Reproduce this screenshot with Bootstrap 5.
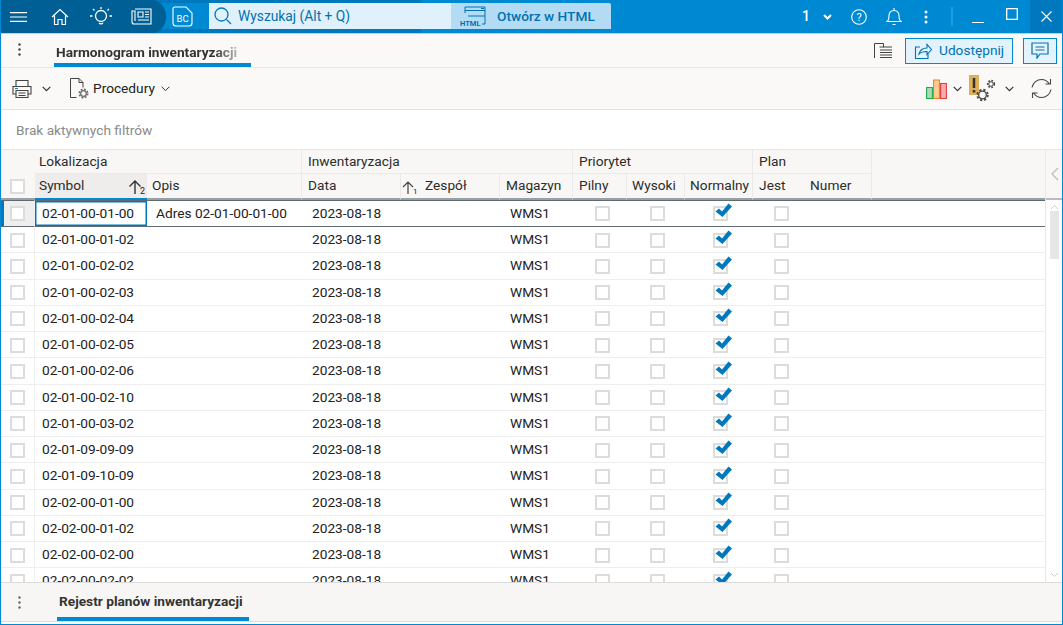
<!DOCTYPE html>
<html lang="pl">
<head>
<meta charset="utf-8">
<title>Harmonogram inwentaryzacji</title>
<link rel="stylesheet" href="https://cdn.jsdelivr.net/npm/bootstrap@5.3.0/dist/css/bootstrap.min.css">
<style>
html,body{height:100%;overflow:hidden}
body{font-family:Roboto,"Liberation Sans",sans-serif;font-size:13.7px;color:#222;background:#fff}
.win{height:625px;border:1px solid #0089d3;border-top:0;display:flex;flex-direction:column;overflow:hidden}
.tbar{height:34px;flex:none;background:linear-gradient(#0078bd 0 3px,transparent 3px 29px,#0078bd 29px) 0 0/420px 100% no-repeat,#0089d3;border-bottom:1px solid #a9d6f0;color:#fff;display:flex;align-items:center}
.tleft{width:166px;height:33px;background:#005f94;border-radius:0 14px 14px 0/0 50% 50% 0;display:flex;align-items:center;flex:none;padding-left:9px;margin-left:-1px}
.tbar svg{display:block}
.bcico{margin-left:6px}
.sbox{width:242px;height:26px;margin-left:16px;margin-top:-1px;background:#e0f1fb;color:#0072b0;font-size:13.8px;display:flex;align-items:center;padding-left:5px;gap:6px}
.htmlbtn{width:160px;height:26px;margin-top:-1px;background:#b3dcf4;border-radius:0 2px 0 0;color:#0072b0;font-size:13.7px;font-weight:500;display:flex;align-items:center;padding-left:9px;gap:10px}
.tright{margin-left:auto;display:flex;align-items:center;height:33px}
.closebox{width:32px;height:33px;background:#0078bd;display:flex;align-items:center;justify-content:center;margin-left:12px}
.onenum{font-size:14px;font-weight:500;margin-right:9px}
.tabs{height:34px;flex:none;background:#faf9f7;border-bottom:1px solid #e9e8e6;display:flex;align-items:flex-start}
.dots{width:36px;flex:none;display:flex;justify-content:center;padding-top:9px}
.tabitem{font-weight:700;color:#333;height:33px;border-bottom:4px solid #0089d3;padding:11px 0 0 2px;line-height:15px;width:197px;margin-left:17px}
.tabitem span{display:block;width:184px;white-space:nowrap;overflow:hidden;-webkit-mask-image:linear-gradient(90deg,#000 86%,rgba(0,0,0,.25))}
.sharebtn{height:26px;background:#e3f2fb;border:1px solid #0089d3;border-radius:0;color:#0072b0;display:flex;align-items:center;padding:0 0 0 8px;font-size:13.7px;gap:7px}
.tools{height:42px;flex:none;background:#faf9f7;border-bottom:1px solid #e2e2e2;display:flex;align-items:center}
.filt{height:40px;flex:none;background:#fff;color:#8a8a8a;padding:13px 0 0 15px;line-height:15px;border-bottom:1px solid #e6e6e6}
.gridwrap{flex:1;min-height:0;display:flex;overflow:hidden;border-bottom:1px solid #dcdcdc}
.tblbox{width:1044px;flex:none;overflow:hidden}
.sidebar{flex:1;display:flex;flex-direction:column;border-left:1px solid #e8e8e8}
.sidetop{height:50px;background:#f8f7f5;border-bottom:2px solid #bbb;display:flex;align-items:center;justify-content:center;flex:none}
.sidescroll{flex:1;display:flex;flex-direction:column;align-items:center;padding-top:4px}
.thumb{width:9px;height:48px;background:#e6e6e6;margin-top:1px}
.sidescroll svg:last-child{margin-top:auto;margin-bottom:4px}
.gt{width:1044px;table-layout:fixed;border-collapse:separate;border-spacing:0;font-size:13.7px}
.gt th{font-weight:400;background:#f8f7f5;padding:0 0 1px 6px;white-space:nowrap;overflow:hidden;color:#2b2b2b}
.gt thead tr:first-child th{height:24px;border-right:1px solid #eceae8;border-bottom:1px solid #eceae8}
.gt thead tr:nth-child(2) th{height:26px;border-right:1px solid #eceae8;border-bottom:2px solid #9aa1a5;box-sizing:border-box}
.gt th.plain{border-right:0!important;border-bottom-color:#f8f7f5!important}
.gt thead tr:nth-child(2) th.plain{border-bottom-color:#9aa1a5!important}
.gt th.sorted{background:#eeedeb;border-bottom:2px solid #0089d3!important;border-right:0!important}
.gt th.sortic{padding:0;text-align:center}
.gt td{height:26.25px;padding:0;border-bottom:1px solid #eeeeee;white-space:nowrap;line-height:15px;vertical-align:middle}
.gt td.ck0{border-right:1px solid #f0f0f0}
.gt td.tx{padding-left:7px}
.gt td.tx2{padding-left:9px}
.gt td.tx3{padding-left:10px}
.gt td.cc{text-align:center}
.gt td.cs{text-align:center;padding-left:4px}
.gt td.cs2{text-align:center;padding-left:2px}
.gt tr.sel td{border-top:1px solid #5f6b73;border-bottom:1px solid #5f6b73;height:27px}
.gt tr.sel td.ck0{background:#eeeeee;box-shadow:inset 3px 0 0 #0078bd}
.gt tr.sel td.act{box-shadow:inset 0 0 0 1.5px #0078bd}
.box{display:inline-block;width:15px;height:15px;background:#fff;border:2px solid #dcdcdc;vertical-align:middle;position:relative}
.box svg{position:absolute;left:0;top:-5px}
.foot{flex:none;height:38px;background:#f7f6f4;display:flex;align-items:flex-start}
.ftab{margin-left:20px;width:192px;height:38px;border-bottom:4px solid #0089d3;padding:11px 0 0 2px;line-height:15px;font-weight:700;color:#333;white-space:nowrap}
.fend{height:3px;flex:none;background:#fff;border-top:1px solid #dddddd}
</style>
</head>
<body>
<div class="win">
  <div class="tbar">
    <div class="tleft">
      <svg width="19" height="12" viewBox="0 0 20 12" fill="none" stroke="#fff" stroke-width="1.300"><path d="M1 1.500h18M1 6h18M1 10.500h18"/></svg>
      <svg style="margin-left:23px" width="18" height="18" viewBox="0 0 18 18" fill="none" stroke="#fff" stroke-width="1.200"><path d="M1 9 9 1.500 17 9M3.500 7.500V16.500h3.500v-5h4v5h3.500V7.500"/></svg>
      <svg style="margin-left:21px" width="22" height="22" viewBox="0 0 22 22" fill="none" stroke="#fff" stroke-width="1.300"><circle cx="11" cy="10" r="5.500"/><path d="M9 17c1 1.200 3 1.200 4 0M11 1v2M3 3l1.500 1.500M19 3l-1.500 1.500M0 10h2.500M19.500 10H22"/></svg>
      <svg style="margin-left:19px" width="21" height="17" viewBox="0 0 21 17" fill="none" stroke="#fff" stroke-width="1.100"><path d="M4 1h16v15H3c-1.200 0-2-.8-2-2V3h3v10"/><path d="M7 4h5v5H7zM14 4h4M14 6.500h4M14 9h4M7 12h11"/></svg>
    </div>
    <svg class="bcico" width="21" height="21" viewBox="0 0 21 21" fill="none" stroke="#fff" stroke-width="1.100"><path d="M1 3c0-1.200.8-2 2-2h11l6 6v10c0 1.500-1 3-3 3H4c-2 0-3-1.500-3-3z"/><text x="4.500" y="16" fill="#fff" stroke="none" font-family="Roboto,sans-serif" font-size="9.500">BC</text></svg>
    <div class="sbox">
      <svg width="18" height="18" viewBox="0 0 18 18" fill="none" stroke="#0078bd" stroke-width="1.300"><circle cx="7.500" cy="7.500" r="6.500"/><path d="m12.500 12.500 4.500 4.500"/></svg>
      <span>Wyszukaj (Alt + Q)</span>
    </div>
    <div class="htmlbtn">
      <svg width="27" height="22" viewBox="0 0 27 22" fill="none" stroke="#0072b0" stroke-width="1"><path d="M5 8V2h20v17M5 5.500h20M8 11h17M21 3.500h3M25 19h-3"/><text x="0" y="21" fill="#0072b0" stroke="none" font-family="Roboto,sans-serif" font-size="7.500" font-weight="700">HTML</text></svg>
      <span>Otwórz w HTML</span>
    </div>
    <div class="tright">
      <span class="onenum">1</span>
      <svg class="ms-1" width="9" height="6" viewBox="0 0 9 6" fill="none" stroke="#fff" stroke-width="2"><path d="m1 1 3.500 3.500L8 1"/></svg>
      <svg style="margin-left:19px" width="16" height="16" viewBox="0 0 16 16" fill="none" stroke="#fff" stroke-width="1.100"><circle cx="8" cy="8" r="7.300"/><text x="8" y="12" fill="#fff" stroke="none" text-anchor="middle" font-family="Roboto,sans-serif" font-size="11">?</text></svg>
      <svg style="margin-left:19px" width="16" height="19" viewBox="0 0 16 19" fill="none" stroke="#fff" stroke-width="1.100"><path d="M1 14.500c2-1.500 2-3 2-6 0-3 2-5 5-5s5 2 5 5c0 3 0 4.500 2 6zM8 1v2.500M6.500 17.500h3"/></svg>
      <svg style="margin-left:22px" width="4" height="14" viewBox="0 0 4 14" fill="#fff"><circle cx="2" cy="2" r="1.500"/><circle cx="2" cy="7" r="1.500"/><circle cx="2" cy="12" r="1.500"/></svg>
      <svg style="margin-left:23px" width="2" height="19" viewBox="0 0 2 19" fill="#1c9bdf"><path d="M0 0h2v19H0z"/></svg>
      <svg style="margin-left:19px;margin-top:12px" width="12" height="2" viewBox="0 0 12 2" fill="#fff"><path d="M0 0h12v1H0z"/></svg>
      <svg style="margin-left:22px;margin-bottom:6px" width="12" height="12" viewBox="0 0 12 12" fill="none" stroke="#fff" stroke-width="1.300"><path d="M.7.700h10.600v10.600H.7z"/></svg>
      <div class="closebox"><svg width="11" height="11" viewBox="0 0 11 11" fill="none" stroke="#fff" stroke-width="1.100"><path d="m.5.500 10 10M10.500.500l-10 10"/></svg></div>
    </div>
  </div>

  <div class="tabs">
    <div class="dots"><svg width="3" height="13" viewBox="0 0 3 13" fill="#444"><circle cx="1.500" cy="1.500" r="1.200"/><circle cx="1.500" cy="6.500" r="1.200"/><circle cx="1.500" cy="11.500" r="1.200"/></svg></div>
    <div class="tabitem"><span>Harmonogram inwentaryzacji</span></div>
    <div class="ms-auto d-flex align-items-center" style="height:33px">
      <svg width="19" height="17" viewBox="0 0 19 17" fill="none" stroke="#444" stroke-width="1"><path d="M1.500 16V1.500h9v3.500h-4M10 5h9M7 8h12M7 10.500h12M7 13h12M7 15.500h12"/></svg>
      <button type="button" class="btn sharebtn" style="width:108px;margin-left:13px">
        <svg width="18" height="18" viewBox="0 0 18 18" fill="none" stroke="#0072b0" stroke-width="1.100"><path d="M6 5H1.500v11.500H14V12"/><path d="M5 12c1-4 4-6 8-6V2.500l4.500 5-4.500 5V9.500c-3 0-6 .5-8 2.500z"/></svg>
        <span>Udostępnij</span>
      </button>
      <button type="button" class="btn sharebtn justify-content-center" style="width:34px;margin-left:10px;margin-right:5px;padding:0">
        <svg width="18" height="17" viewBox="0 0 18 17" fill="none" stroke="#0072b0" stroke-width="1.200"><path d="M1 1h16v11H9l-3 4v-4H1z"/><path d="M4.500 5h9M4.500 8h9"/></svg>
      </button>
    </div>
  </div>

  <div class="tools">
    <svg style="margin-left:11px" width="20" height="20" viewBox="0 0 20 20" fill="none" stroke="#444" stroke-width="1.100"><path d="M4 7V1.500h12V7M4 15H1V7.500h18V15h-3"/><path d="M4 11.500h12v7H4zM6.500 14h7M6.500 16.500h7"/><path d="M3 9.500h3" stroke="#0089d3"/></svg>
    <svg style="margin-left:10px" width="9" height="6" viewBox="0 0 9 6" fill="none" stroke="#333" stroke-width="1.200"><path d="m.7.800 3.800 3.800L8.300.8"/></svg>
    <svg style="margin-left:18px" width="20" height="21" viewBox="0 0 20 21" fill="none" stroke="#444" stroke-width="1"><path d="M7.500 19.500h-6V.5H10l4 4v5M10 .5v4h4"/><circle cx="14.500" cy="15.500" r="2.800" stroke="#666" stroke-width="1.200"/><circle cx="14.500" cy="15.500" r="4.200" stroke="#666" stroke-width="1.600" stroke-dasharray="1.800 1.500"/></svg>
    <span style="margin-left:4px" class="text-nowrap">Procedury</span>
    <svg style="margin-left:6px" width="9" height="6" viewBox="0 0 9 6" fill="none" stroke="#333" stroke-width="1"><path d="m.7.800 3.800 3.800L8.300.8"/></svg>
    <div class="ms-auto d-flex align-items-center">
      <svg width="21" height="20" viewBox="0 0 21 20" stroke-width="1.100"><path d="M.6 8.500h5.800v11H.6z" fill="#a8dcb4" stroke="#1fa84f"/><path d="M7.600 1h5.800v18.500H7.600z" fill="#fbcf96" stroke="#ef7d22"/><path d="M14.600 4.500h5.800v15h-5.800z" fill="#f6adad" stroke="#e23b3b"/></svg>
      <svg style="margin-left:6px" width="9" height="6" viewBox="0 0 9 6" fill="none" stroke="#333" stroke-width="1.200"><path d="m.7.800 3.800 3.800L8.300.8"/></svg>
      <svg style="margin-left:7px" width="27" height="28" viewBox="0 0 27 28" fill="none"><path d="M0 0h10v20H0z" fill="#dfae58"/><path d="M5 3v10" stroke="#333" stroke-width="2.500"/><path d="M3.700 15h2.600v2.500H3.700z" fill="#333"/><circle cx="13.500" cy="20" r="3.800" stroke="#444" stroke-width="1.300"/><circle cx="13.500" cy="20" r="5.300" stroke="#444" stroke-width="1.800" stroke-dasharray="2.200 2"/><circle cx="22" cy="9" r="2.300" stroke="#444"/><circle cx="22" cy="9" r="3.400" stroke="#444" stroke-width="1.500" stroke-dasharray="1.700 1.500"/></svg>
      <svg style="margin-left:9px" width="9" height="6" viewBox="0 0 9 6" fill="none" stroke="#333" stroke-width="1.200"><path d="m.7.800 3.800 3.800L8.300.8"/></svg>
      <svg style="margin-left:17px;margin-right:10px" width="21" height="21" viewBox="0 0 21 21" fill="none" stroke="#444" stroke-width="1.100"><path d="M1 9.500C2 4.500 6 1.500 10.500 1.500c3.500 0 6 1.500 8 4.500M19.500 1v5h-5M20 11.500c-1 5-5 8-9.500 8-3.500 0-6-1.500-8-4.500M1.500 20v-5h5"/></svg>
    </div>
  </div>

  <div class="filt">Brak aktywnych filtrów</div>

  <div class="gridwrap">
    <div class="tblbox">
      <table class="gt">
        <colgroup><col style="width:34px"><col style="width:92px"><col style="width:20px"><col style="width:155px"><col style="width:99px"><col style="width:18px"><col style="width:81px"><col style="width:73px"><col style="width:54px"><col style="width:58px"><col style="width:68px"><col style="width:52px"><col style="width:67px"><col></colgroup>
        <thead>
          <tr>
            <th class="plain"></th>
            <th colspan="3" style="padding-left:4px">Lokalizacja</th>
            <th colspan="4">Inwentaryzacja</th>
            <th colspan="3">Priorytet</th>
            <th colspan="2">Plan</th>
            <th class="plain"></th>
          </tr>
          <tr>
            <th class="plain"><span class="box" style="margin-left:3px"></span></th>
            <th class="sorted" style="padding-left:4px">Symbol</th>
            <th class="sorted sortic"><svg width="18" height="16" viewBox="0 0 18 16" fill="none" stroke="#333" stroke-width="1.400"><path d="M7 15V2M1.500 7.500 7 2l5.500 5.500"/><text x="12" y="15" fill="#222" stroke="none" font-family="Roboto,sans-serif" font-size="9">2</text></svg></th>
            <th style="padding-left:5px">Opis</th>
            <th>Data</th>
            <th class="sortic" style="border-right:0"><svg width="16" height="15" viewBox="0 0 16 15" fill="none" stroke="#444" stroke-width="1.200"><path d="M6 14V2M1 7l5-5 5 5"/><text x="11" y="14" fill="#222" stroke="none" font-family="Roboto,sans-serif" font-size="8">1</text></svg></th>
            <th>Zespół</th>
            <th>Magazyn</th>
            <th>Pilny</th>
            <th style="padding-left:5px">Wysoki</th>
            <th style="padding-left:5px">Normalny</th>
            <th style="border-right:0">Jest</th>
            <th style="padding-left:5px">Numer</th>
            <th class="plain"></th>
          </tr>
        </thead>
        <tbody id="rows"></tbody>
      </table>
    </div>
    <div class="sidebar">
      <div class="sidetop"><svg width="9" height="14" viewBox="0 0 9 14" fill="none" stroke="#bbb" stroke-width="1.200"><path d="M8 1 2 7l6 6"/></svg></div>
      <div class="sidescroll">
        <svg width="9" height="6" viewBox="0 0 9 6" fill="none" stroke="#ccc"><path d="m1 5 3.500-3.500L8 5"/></svg>
        <div class="thumb"></div>
        <svg width="9" height="6" viewBox="0 0 9 6" fill="none" stroke="#ccc"><path d="m1 1 3.500 3.500L8 1"/></svg>
      </div>
    </div>
  </div>

  <div class="foot">
    <div class="dots" style="padding-top:13px"><svg width="3" height="13" viewBox="0 0 3 13" fill="#666"><circle cx="1.500" cy="1.500" r="1.200"/><circle cx="1.500" cy="6.500" r="1.200"/><circle cx="1.500" cy="11.500" r="1.200"/></svg></div>
    <div class="ftab">Rejestr planów inwentaryzacji</div>
  </div>
  <div class="fend"></div>
</div>
<script>
var syms=["02-01-00-01-00","02-01-00-01-02","02-01-00-02-02","02-01-00-02-03","02-01-00-02-04","02-01-00-02-05","02-01-00-02-06","02-01-00-02-10","02-01-00-03-02","02-01-09-09-09","02-01-09-10-09","02-02-00-01-00","02-02-00-01-02","02-02-00-02-00","02-02-00-02-02"];
var chk='<svg width="17" height="15" viewBox="0 0 17 15" fill="#0078bd"><path d="M.5 8.500 4 5.500l3 3L13.500.5 17 3.500 7.500 14z"/></svg>';
document.getElementById('rows').innerHTML=syms.map(function(s,i){
 return '<tr'+(i==0?' class="sel"':'')+'><td class="ck0 cc"><span class="box"></span></td>'+
 '<td colspan="2" class="tx'+(i==0?' act':'')+'">'+s+'</td>'+
 '<td class="tx2">'+(i==0?'Adres '+s:'')+'</td>'+
 '<td colspan="2" class="tx3">2023-08-18</td><td></td>'+
 '<td class="tx3">WMS1</td>'+
 '<td class="cs"><span class="box"></span></td><td class="cs2"><span class="box"></span></td>'+
 '<td class="cs2"><span class="box">'+chk+'</span></td><td class="cs"><span class="box"></span></td><td></td><td></td></tr>';
}).join('');
</script>
</body>
</html>
